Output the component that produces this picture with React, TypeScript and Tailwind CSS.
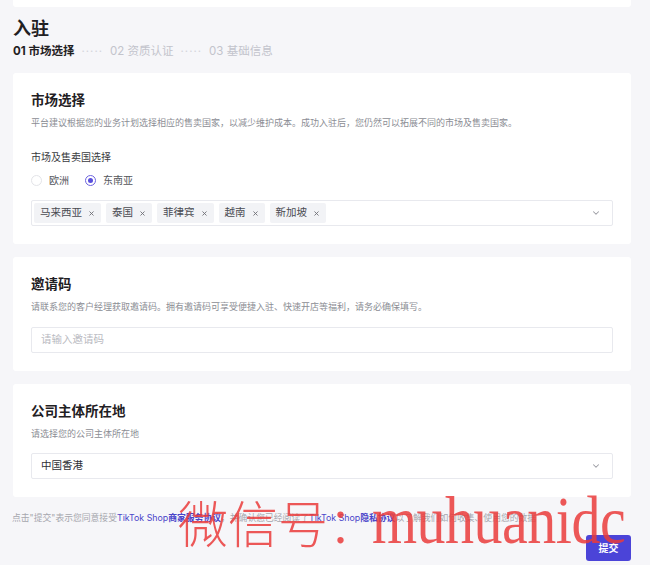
import { ChevronDown, X } from "lucide-react";

const markets = ["马来西亚", "泰国", "菲律宾", "越南", "新加坡"];

function Card({
  title,
  desc,
  children,
}: {
  title: string;
  desc: string;
  children: React.ReactNode;
}) {
  return (
    <div className="bg-white rounded-[3px] px-[18px] pt-[17px] pb-[18px]">
      <h2 className="text-[13.5px] leading-5 font-bold text-[#1f2023]">{title}</h2>
      <p className="mt-[6px] text-[9px] leading-[14px] text-[#8b8d94]">{desc}</p>
      {children}
    </div>
  );
}

export default function App() {
  return (
    <div
      className="relative min-h-[565px] overflow-hidden bg-[#f6f6f9] pl-[13px] pr-[19px]"
      style={{ fontFamily: 'Inter, "Noto Sans CJK SC", sans-serif' }}
    >
      {/* previous card, scrolled off */}
      <div className="h-[7px] bg-white rounded-b-[3px]" />

      <h1 className="mt-[10px] text-[18px] leading-6 font-bold text-[#1f2023]">入驻</h1>
      <div className="mt-[2px] flex items-center gap-[7px] text-[11.5px] leading-4">
        <span className="font-bold text-[#1f2023]">01 市场选择</span>
        <span className="text-[#d4d5db] tracking-[1px]">·····</span>
        <span className="text-[#c3c4cc]">02 资质认证</span>
        <span className="text-[#d4d5db] tracking-[1px]">·····</span>
        <span className="text-[#c3c4cc]">03 基础信息</span>
      </div>

      <div className="mt-[14px] flex flex-col gap-[13px]">
        <Card
          title="市场选择"
          desc="平台建议根据您的业务计划选择相应的售卖国家，以减少维护成本。成功入驻后，您仍然可以拓展不同的市场及售卖国家。"
        >
          <div className="mt-[20px] text-[10px] leading-[14px] text-[#3a3b40]">市场及售卖国选择</div>
          <div className="mt-[8px] flex items-center gap-[16px] text-[10px] leading-4 text-[#55565c]">
            <label className="flex items-center gap-[7px]">
              <span className="w-[11px] h-[11px] rounded-full border border-[#e3e4e8]" />
              欧洲
            </label>
            <label className="flex items-center gap-[7px]">
              <span className="w-[11px] h-[11px] rounded-full border border-[#6d63e0] flex items-center justify-center">
                <span className="w-[5px] h-[5px] rounded-full bg-[#5a50dc]" />
              </span>
              东南亚
            </label>
          </div>
          <div className="mt-[12px] h-[26px] flex items-center justify-between border border-[#e8e9ee] rounded-[2px] pl-[2px] pr-[11px]">
            <div className="flex items-center gap-[5px]">
              {markets.map((m) => (
                <span
                  key={m}
                  className="h-[20px] flex items-center gap-[6px] bg-[#f2f3f6] rounded-[2px] px-[6px] text-[10.5px] text-[#4a4b52]"
                >
                  {m}
                  <X className="w-[7px] h-[7px] text-[#6b6c72]" strokeWidth={3} />
                </span>
              ))}
            </div>
            <ChevronDown className="w-[10px] h-[10px] text-[#9a9ba2]" strokeWidth={2.5} />
          </div>
        </Card>

        <Card
          title="邀请码"
          desc="请联系您的客户经理获取邀请码。拥有邀请码可享受便捷入驻、快速开店等福利，请务必确保填写。"
        >
          <div className="mt-[13px] h-[26px] flex items-center border border-[#e8e9ee] rounded-[2px] px-[9px] text-[10.5px] text-[#b9bac1]">
            请输入邀请码
          </div>
        </Card>

        <Card title="公司主体所在地" desc="请选择您的公司主体所在地">
          <div className="mt-[12px] h-[26px] flex items-center justify-between border border-[#e8e9ee] rounded-[2px] pl-[9px] pr-[11px]">
            <span className="text-[10.5px] text-[#2e2f34]">中国香港</span>
            <ChevronDown className="w-[10px] h-[10px] text-[#9a9ba2]" strokeWidth={2.5} />
          </div>
        </Card>
      </div>

      <p className="mt-[15px] -ml-px text-[8.8px] leading-3 text-[#a6a7ae] whitespace-nowrap">
        点击"提交"表示您同意接受<span className="text-[#4a44c9]">TikTok Shop</span>
        <span className="text-[#4a44c9] font-bold">商家服务协议</span>，并确认您已经阅读了
        <span className="text-[#4a44c9]">TikTok Shop</span>
        <span className="text-[#4a44c9] font-bold">隐私协议</span>以了解我们如何收集、使用您的数据
      </p>

      <div className="mt-[11px] flex justify-end">
        <button className="w-[45px] h-[26px] rounded-[3px] bg-[#4b44d8] text-white text-[10px] font-bold">
          提交
        </button>
      </div>

      {/* watermark overlay */}
      <div
        className="absolute left-[178px] top-[496px] flex items-end whitespace-nowrap pointer-events-none text-[#ea3b3b]/85 leading-[60px]"
        style={{ fontFamily: '"Liberation Serif", "Noto Sans CJK SC", serif' }}
      >
        <span className="text-[50px] font-light">微信号：</span>
        <span className="-ml-[6px] inline-block origin-bottom scale-y-[1.15] text-[58px] tracking-[-0.5px]">muhuanidc</span>
      </div>
    </div>
  );
}
